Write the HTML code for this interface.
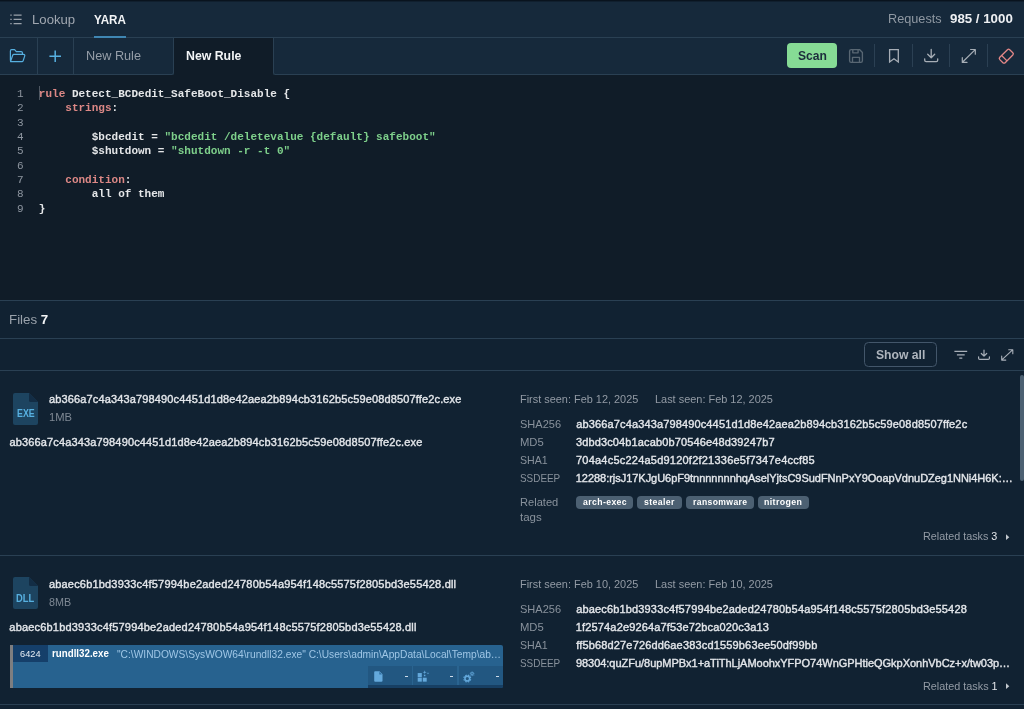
<!DOCTYPE html>
<html>
<head>
<meta charset="utf-8">
<title>YARA</title>
<style>
*{box-sizing:border-box;margin:0;padding:0}
html,body{width:1024px;height:709px;overflow:hidden;background:#112232;font-family:"Liberation Sans",sans-serif;color:#e3e6ea}
.abs{position:absolute}
#root{position:relative;width:1024px;height:709px;overflow:hidden;will-change:transform;-webkit-font-smoothing:antialiased}
/* header */
#hdr{left:0;top:0;width:1024px;height:37px;background:#16293b}
#hdr .strip{left:0;top:0;width:1024px;height:2px;background:linear-gradient(#09131e 0%,#09131e 45%,#16293b 100%)}
.hline{left:0;width:1024px;height:1px;background:#2a4053}
.t13{font-size:13px;line-height:16px;white-space:nowrap}
/* tab bar */
#tabs{left:0;top:38px;width:1024px;height:37px}
.vsep{width:1px;background:#2a4053}
/* editor */
#ed{left:0;top:75px;width:1024px;height:225px;background:#101c28}
.ln{left:0;width:23.5px;text-align:right;color:#8d959f;font-family:"Liberation Mono",monospace;font-size:11px;line-height:14.325px;white-space:pre}
.code{left:38.8px;font-family:"Liberation Mono",monospace;font-size:11px;line-height:14.325px;white-space:pre;color:#e4e6e8;font-weight:bold;letter-spacing:.013px}
.kw{color:#dd8886}
.st{color:#7ed08b}
/* files */
.lbl{color:#89929c}
.f11{font-size:11px;line-height:14px;white-space:nowrap;margin-top:-1px}
.e2 .f11{margin-top:0}
.val{color:#e3e6ea;font-weight:normal;-webkit-text-stroke:.38px #e3e6ea}
.tagbg{height:13px;margin-top:-.2px;border-radius:4px;background:#4c6072}
.tagtx{color:#fff;font-size:9px;font-weight:bold;line-height:12.6px;letter-spacing:.4px;white-space:nowrap}
</style>
</head>
<body>
<div id="root">

<!-- HEADER -->
<div id="hdr" class="abs">
  <div class="strip abs"></div>
  <svg class="abs" style="left:10px;top:14px" width="12" height="11" viewBox="0 0 12 11" fill="none" stroke="#9aa2ab" stroke-width="1.2">
    <path d="M0.3 1.1h1.4M3.6 1.1h8M0.3 5.4h1.4M3.6 5.4h8M0.3 9.7h1.4M3.6 9.7h8"/>
  </svg>
  <div class="abs t13" id="lookup" style="left:32.09px;top:12px;color:#a0a7b0;transform:scaleX(1.0127);transform-origin:0 0">Lookup</div>
  <div class="abs t13" id="yara" style="left:93.95px;top:12px;color:#f2f4f6;font-weight:bold;transform:scaleX(0.8965);transform-origin:0 0">YARA</div>
  <div class="abs t13" id="req" style="left:887.90px;top:11px;color:#8f98a2;transform:scaleX(0.9766);transform-origin:0 0">Requests</div>
  <div class="abs t13" id="reqn" style="left:949.79px;top:11px;color:#eef0f3;font-weight:bold;transform:scaleX(1.0215);transform-origin:0 0">985 / 1000</div>
</div>
<div class="abs hline" style="top:37px"></div>
<div class="abs" style="left:93.5px;top:36px;width:32px;height:2px;background:#3f86b3"></div>

<!-- TAB BAR -->
<div id="tabs" class="abs" style="background:#101c28">
  <div class="abs" style="left:0;top:0;width:174px;height:37px;background:#16293b;border-right:1px solid #2a4053;border-bottom:1px solid #2a4053;border-bottom-right-radius:2.5px"></div>
  <div class="abs" style="left:273px;top:0;width:751px;height:37px;background:#16293b;border-left:1px solid #2a4053;border-bottom:1px solid #2a4053;border-bottom-left-radius:2.5px"></div>
  <div class="abs vsep" style="left:37px;top:0;height:36px"></div>
  <div class="abs vsep" style="left:73px;top:0;height:36px"></div>
  <div class="abs t13" id="tab1" style="left:85.51px;top:10px;color:#969ea8;transform:scaleX(0.9757);transform-origin:0 0">New Rule</div>
  <div class="abs t13" id="tab2" style="left:185.77px;top:10px;color:#f2f4f6;font-weight:bold;transform:scaleX(0.9469);transform-origin:0 0">New Rule</div>
</div>

<!-- TOOLBAR ICONS -->
<svg class="abs" style="left:9px;top:48px" width="17" height="16" viewBox="0 0 17 16" fill="none" stroke="#57b0e0" stroke-width="1.2" stroke-linejoin="round" stroke-linecap="round">
  <path d="M1.4 12.3V2.9c0-.7.5-1.2 1.2-1.2h3l1.7 1.9h4.9c.7 0 1.2.5 1.2 1.2v1.5"/>
  <path d="M1.5 13.6l2.2-6.4c.2-.5.6-.8 1.100-.8h9.900c.8 0 1.300.7 1.050 1.450l-1.600 4.900c-.2.500-.6.850-1.150.850H1.500z"/>
</svg>
<svg class="abs" style="left:49px;top:50px" width="13" height="13" viewBox="0 0 13 13" fill="none" stroke="#57b0e0" stroke-width="1.5">
  <path d="M6.2 0.600v11.400M0.400 6.300h11.600"/>
</svg>
<div class="abs" id="scan" style="left:787px;top:43px;width:50px;height:25px;border-radius:4px;background:#86db95"></div>
<div class="abs t13" id="scantx" style="left:798.16px;top:48px;color:#1c2c3c;font-weight:bold;transform:scaleX(0.9310);transform-origin:0 0">Scan</div>
<svg class="abs" style="left:848px;top:48px" width="16" height="16" viewBox="0 0 16 16" fill="none" stroke="#596773" stroke-width="1.35" stroke-linejoin="round">
  <path d="M1.600 3.200c0-.9.700-1.600 1.600-1.600h8.300l2.900 2.900v8.300c0 .9-.7 1.600-1.600 1.600H3.200c-.9 0-1.600-.7-1.600-1.600z"/>
  <path d="M4.800 1.800v3h5.300v-3M4.500 14.200V9.300h7v4.900"/>
</svg>
<div class="abs vsep" style="left:874px;top:44px;height:23px;background:#2b4053"></div>
<svg class="abs" style="left:888px;top:48px" width="12" height="16" viewBox="0 0 12 16" fill="none" stroke="#a7aeb6" stroke-width="1.300" stroke-linejoin="miter">
  <path d="M1.600 1.700h8.700v12.300l-4.350-3.200-4.350 3.200z"/>
</svg>
<div class="abs vsep" style="left:912px;top:44px;height:23px;background:#2b4053"></div>
<svg class="abs" style="left:923px;top:48px" width="17" height="16" viewBox="0 0 17 16" fill="none" stroke="#a7aeb6" stroke-width="1.300" stroke-linecap="round" stroke-linejoin="round">
  <path d="M8.200 1.500v8M4.700 6.200l3.500 3.500 3.500-3.500M1.700 10.800v1.400c0 .8.600 1.400 1.400 1.400h10.200c.8 0 1.400-.6 1.400-1.400v-1.400"/>
</svg>
<div class="abs vsep" style="left:949px;top:44px;height:23px;background:#2b4053"></div>
<svg class="abs" style="left:961px;top:48px" width="16" height="16" viewBox="0 0 16 16" fill="none" stroke="#a7aeb6" stroke-width="1.200" stroke-linecap="round" stroke-linejoin="round">
  <path d="M1.400 14.300L14.200 1.600M9.600 1.500h4.700v4.700M1.300 9.700v4.700h4.700"/>
</svg>
<div class="abs vsep" style="left:987px;top:44px;height:23px;background:#2b4053"></div>
<svg class="abs" style="left:997px;top:47px" width="18" height="18" viewBox="0 0 18 18" fill="none" stroke="#e38787" stroke-width="1.300" stroke-linejoin="round">
  <g transform="rotate(-45 9.300 9.200)"><rect x="2.300" y="5.400" width="14" height="7.600" rx="1.600"/><path d="M6.500 5.400v7.600"/></g>
</svg>

<!-- EDITOR -->
<div id="ed" class="abs">
<div class="abs ln" style="top:12px">1
2
3
4
5
6
7
8
9</div>
<div class="abs" style="left:39px;top:11px;width:1px;height:14px;background:#4e5762"></div>
<div class="abs code" style="top:12px"><span class="kw">rule</span> Detect_BCDedit_SafeBoot_Disable {
    <span class="kw">strings</span>:

        $bcdedit = <span class="st">"bcdedit /deletevalue {default} safeboot"</span>
        $shutdown = <span class="st">"shutdown -r -t 0"</span>

    <span class="kw">condition</span>:
        all of them
}</div>
</div>
<div class="abs hline" style="top:300px"></div>

<!-- FILES HEADER -->
<div class="abs t13" id="files" style="left:8.67px;top:311.5px;color:#9aa2ab;transform:scaleX(1.0242);transform-origin:0 0">Files <b style="color:#f2f4f6">7</b></div>
<div class="abs hline" style="top:338px"></div>
<div class="abs hline" style="top:370px"></div>

<!-- SHOW ALL ROW -->
<div class="abs" id="showall" style="left:864px;top:342px;width:73px;height:25px;border:1px solid #43566a;border-radius:4.500px"></div>
<div class="abs t13" id="showtx" style="color:#aeb5bd;left:875.66px;top:347px;font-weight:bold;transform:scaleX(0.9363);transform-origin:0 0">Show all</div>
<svg class="abs" style="left:954px;top:350px" width="14" height="10" viewBox="0 0 14 10" fill="none" stroke="#a9b0b9" stroke-width="1.300">
  <path d="M0.400 1.300h12.800M2.900 4.800h7.800M5.300 8.200h3"/>
</svg>
<svg class="abs" style="left:977px;top:349px" width="14" height="12" viewBox="0 0 14 12" fill="none" stroke="#a9b0b9" stroke-width="1.200" stroke-linecap="round" stroke-linejoin="round">
  <path d="M7 1.200v5.800M4.300 4.500L7 7.200l2.700-2.700M1.600 7.800v1.400c0 .7.500 1.200 1.200 1.200h8.400c.7 0 1.200-.5 1.200-1.200V7.800"/>
</svg>
<svg class="abs" style="left:1000px;top:348px" width="14" height="14" viewBox="0 0 14 14" fill="none" stroke="#a9b0b9" stroke-width="1.100" stroke-linecap="round" stroke-linejoin="round">
  <path d="M1.800 11.900L12.600 1.900M8.700 1.700h4.100v4.100M1.700 8v4.100h4.100"/>
</svg>
<div class="abs" style="left:1020px;top:374.500px;width:4px;height:106px;border-radius:2px;background:#4c6072"></div>
<!-- ENTRY 1 -->
<div class="abs" style="left:0;top:370.5px;width:1024px;height:0">
<svg class="abs" style="left:13.2px;top:22px" width="25" height="32" viewBox="0 0 25 32"><path d="M2 0h14L25 9V30a2 2 0 0 1-2 2H2a2 2 0 0 1-2-2V2a2 2 0 0 1 2-2z" fill="#1d4460"/><path d="M16 0L25 9h-7.500a1.500 1.500 0 0 1-1.500-1.500z" fill="#132d45"/></svg>
<div class="abs" id="ext1" style="left:16.85px;top:37.500px;font-size:10px;line-height:12px;color:#57b0e0;font-weight:bold;white-space:nowrap;transform:scaleX(0.8819);transform-origin:0 0">EXE</div>
<div class="abs f11 val" id="fn1" style="left:49.03px;top:22.300px;letter-spacing:0.141px">ab366a7c4a343a798490c4451d1d8e42aea2b894cb3162b5c59e08d8507ffe2c.exe</div>
<div class="abs f11" id="sz1" style="left:48.77px;top:40px;color:#7f8994;transform:scaleX(1.0188);transform-origin:0 0">1MB</div>
<div class="abs f11 val" id="fn1b" style="left:9.47px;top:65.300px;letter-spacing:0.148px">ab366a7c4a343a798490c4451d1d8e42aea2b894cb3162b5c59e08d8507ffe2c.exe</div>
<div class="abs f11" id="fs1" style="left:520.19px;top:22px;color:#939ba5;transform:scaleX(0.9923);transform-origin:0 0">First seen: Feb 12, 2025</div>
<div class="abs f11" id="ls1" style="left:655.07px;top:22px;color:#939ba5;transform:scaleX(0.9934);transform-origin:0 0">Last seen: Feb 12, 2025</div>
<div class="abs f11 lbl" id="k10" style="left:519.77px;top:47px;transform:scaleX(1.0015);transform-origin:0 0">SHA256</div>
<div class="abs f11 val" id="v10" style="left:576.20px;top:47px;letter-spacing:0.140px">ab366a7c4a343a798490c4451d1d8e42aea2b894cb3162b5c59e08d8507ffe2c</div>
<div class="abs f11 lbl" id="k11" style="left:520.19px;top:65px;transform:scaleX(1.0222);transform-origin:0 0">MD5</div>
<div class="abs f11 val" id="v11" style="left:575.99px;top:65px;letter-spacing:0.133px">3dbd3c04b1acab0b70546e48d39247b7</div>
<div class="abs f11 lbl" id="k12" style="left:519.83px;top:83px;transform:scaleX(0.9644);transform-origin:0 0">SHA1</div>
<div class="abs f11 val" id="v12" style="left:575.98px;top:83px;letter-spacing:0.223px">704a4c5c224a5d9120f2f21336e5f7347e4ccf85</div>
<div class="abs f11 lbl" id="k13" style="left:520.35px;top:101px;transform:scaleX(0.9013);transform-origin:0 0">SSDEEP</div>
<div class="abs f11 val" id="v13" style="left:575.71px;top:101px;letter-spacing:-0.029px">12288:rjsJ17KJgU6pF9tnnnnnnnhqAselYjtsC9SudFNnPxY9OoapVdnuDZeg1NNi4H6K:&hellip;</div>
<div class="abs f11 lbl" id="rt1" style="left:520.18px;top:125.5px;transform:scaleX(1.0077);transform-origin:0 0">Related</div>
<div class="abs f11 lbl" id="rt1b" style="left:520.15px;top:140.5px;transform:scaleX(1.0454);transform-origin:0 0">tags</div>
<div class="abs tagbg" style="left:576.0px;top:125.4px;width:57.3px"></div><div class="abs tagtx" id="tg10" style="left:582.83px;top:125.4px;transform:scaleX(0.9655);transform-origin:0 0">arch-exec</div>
<div class="abs tagbg" style="left:637.3px;top:125.4px;width:44.7px"></div><div class="abs tagtx" id="tg11" style="left:643.99px;top:125.4px;transform:scaleX(0.9704);transform-origin:0 0">stealer</div>
<div class="abs tagbg" style="left:686.0px;top:125.4px;width:68.0px"></div><div class="abs tagtx" id="tg12" style="left:692.58px;top:125.4px;transform:scaleX(0.9544);transform-origin:0 0">ransomware</div>
<div class="abs tagbg" style="left:757.6px;top:125.4px;width:51.0px"></div><div class="abs tagtx" id="tg13" style="left:763.75px;top:125.4px;transform:scaleX(0.9788);transform-origin:0 0">nitrogen</div>
<div class="abs f11" id="rk1" style="left:922.68px;top:159px;color:#939ba5;transform:scaleX(0.9802);transform-origin:0 0">Related tasks <span style="color:#e3e6ea">3</span></div>
<svg class="abs" style="left:1006.2px;top:163.0px" width="4" height="7" viewBox="0 0 4 7"><path d="M0 0.300l3.300 2.900L0 6.100z" fill="#c3c9cf"/></svg>
</div>
<div class="abs hline" style="top:555px"></div>
<!-- ENTRY 2 -->
<div class="abs e2" style="left:0;top:555px;width:1024px;height:0">
<svg class="abs" style="left:13.2px;top:22px" width="25" height="32" viewBox="0 0 25 32"><path d="M2 0h14L25 9V30a2 2 0 0 1-2 2H2a2 2 0 0 1-2-2V2a2 2 0 0 1 2-2z" fill="#1d4460"/><path d="M16 0L25 9h-7.500a1.500 1.500 0 0 1-1.500-1.500z" fill="#132d45"/></svg>
<div class="abs" id="ext2" style="left:16.10px;top:37.500px;font-size:10px;line-height:12px;color:#57b0e0;font-weight:bold;white-space:nowrap;transform:scaleX(0.9373);transform-origin:0 0">DLL</div>
<div class="abs f11 val" id="fn2" style="left:48.93px;top:22.300px;letter-spacing:0.187px">abaec6b1bd3933c4f57994be2aded24780b54a954f148c5575f2805bd3e55428.dll</div>
<div class="abs f11" id="sz2" style="left:49.15px;top:40px;color:#7f8994;transform:scaleX(0.9779);transform-origin:0 0">8MB</div>
<div class="abs f11 val" id="fn2b" style="left:9.37px;top:65.300px;letter-spacing:0.187px">abaec6b1bd3933c4f57994be2aded24780b54a954f148c5575f2805bd3e55428.dll</div>
<div class="abs f11" id="fs2" style="left:520.19px;top:22px;color:#939ba5;transform:scaleX(0.9923);transform-origin:0 0">First seen: Feb 10, 2025</div>
<div class="abs f11" id="ls2" style="left:655.07px;top:22px;color:#939ba5;transform:scaleX(0.9934);transform-origin:0 0">Last seen: Feb 10, 2025</div>
<div class="abs f11 lbl" id="k20" style="left:519.77px;top:47px;transform:scaleX(1.0015);transform-origin:0 0">SHA256</div>
<div class="abs f11 val" id="v20" style="left:576.15px;top:47px;letter-spacing:0.161px">abaec6b1bd3933c4f57994be2aded24780b54a954f148c5575f2805bd3e55428</div>
<div class="abs f11 lbl" id="k21" style="left:520.19px;top:65px;transform:scaleX(1.0222);transform-origin:0 0">MD5</div>
<div class="abs f11 val" id="v21" style="left:575.84px;top:65px;letter-spacing:0.148px">1f2574a2e9264a7f53e72bca020c3a13</div>
<div class="abs f11 lbl" id="k22" style="left:519.83px;top:83px;transform:scaleX(0.9644);transform-origin:0 0">SHA1</div>
<div class="abs f11 val" id="v22" style="left:576.16px;top:83px;letter-spacing:0.164px">ff5b68d27e726dd6ae383cd1559b63ee50df99bb</div>
<div class="abs f11 lbl" id="k23" style="left:520.35px;top:101px;transform:scaleX(0.9013);transform-origin:0 0">SSDEEP</div>
<div class="abs f11 val" id="v23" style="left:575.90px;top:101px;letter-spacing:-0.028px">98304:quZFu/8upMPBx1+aTiThLjAMoohxYFPO74WnGPHtieQGkpXonhVbCz+x/tw03p&hellip;</div>
<div class="abs f11" id="rk2" style="left:922.72px;top:124px;color:#939ba5;transform:scaleX(0.9841);transform-origin:0 0">Related tasks <span style="color:#e3e6ea">1</span></div>
<svg class="abs" style="left:1006.2px;top:128.0px" width="4" height="7" viewBox="0 0 4 7"><path d="M0 0.300l3.300 2.900L0 6.100z" fill="#c3c9cf"/></svg>
</div>
<div class="abs hline" style="top:704px"></div>
<!-- PROCESS BOX -->
<div class="abs" style="left:10px;top:645px;width:493px;height:42.6px;background:#27628f;border-radius:0 2px 2px 0;overflow:hidden">
  <div class="abs" style="left:0;top:0;width:2.5px;height:100%;background:#7e7e80"></div>
  <div class="abs" style="left:2.5px;top:0;width:35px;height:17.3px;background:#153f6a"></div>
  <div class="abs" style="right:0;bottom:0;width:135px;height:21.9px;background:#173f63">
    <div class="abs" style="left:0;top:0;width:135px;height:19.1px;background:#225781"></div>
    <div class="abs" style="left:44px;top:0;width:1.2px;height:19.1px;background:#2a6490"></div>
    <div class="abs" style="left:89.400px;top:0;width:1.2px;height:19.1px;background:#2a6490"></div>
  </div>
</div>
<div class="abs" id="pid" style="left:19.51px;top:647.500px;font-size:9px;line-height:12px;color:#e6edf4;white-space:nowrap;transform:scaleX(1.0253);transform-origin:0 0">6424</div>
<div class="abs f11" id="pname" style="left:52.27px;top:646.500px;color:#fff;font-weight:bold;transform:scaleX(0.8853);transform-origin:0 0">rundll32.exe</div>
<div class="abs f11" id="pcmd" style="left:117.00px;top:647.500px;color:#9fc6e6;transform:scaleX(0.9283);transform-origin:0 0">"C:\WINDOWS\SysWOW64\rundll32.exe" C:\Users\admin\AppData\Local\Temp\ab&hellip;</div>
<svg class="abs" style="left:373.6px;top:671px" width="9" height="11" viewBox="0 0 9 11"><path d="M1.100 0.200h4.300L8.500 3.300v6.500c0 .5-.4.900-.9.900H1.100c-.5 0-.9-.4-.9-.9V1.100c0-.5.400-.9.900-.9z" fill="#64a9dc"/><path d="M5.300 0.800v2.600h2.600z" fill="#2f6e9f"/></svg>
<div class="abs" style="left:404.800px;top:676px;width:2.800px;height:1.200px;background:#cfdcea"></div>
<svg class="abs" style="left:416.500px;top:670px" width="13" height="12" viewBox="0 0 13 12" fill="#64a9dc"><rect x="0.700" y="3.050" width="4.100" height="4.100"/><rect x="0.700" y="7.700" width="4.100" height="3.950"/><rect x="5.800" y="7.700" width="3.900" height="3.950"/><path d="M7.70 0.30L8.15 1.85L9.70 2.30L8.15 2.75L7.70 4.30L7.25 2.75L5.70 2.30L7.25 1.85zM11.00 1.95L11.32 2.93L12.30 3.25L11.32 3.57L11.00 4.55L10.68 3.57L9.70 3.25L10.68 2.93z"/><rect x="6.900" y="4.700" width="1.500" height="1.500"/></svg>
<div class="abs" style="left:450px;top:676px;width:2.800px;height:1.200px;background:#cfdcea"></div>
<svg class="abs" style="left:462.500px;top:670.500px" width="12" height="12" viewBox="0 0 12 12" fill="none" stroke="#64a9dc"><circle cx="4.3" cy="7.6" r="2.35" stroke-width="1.5"/><path d="M6.89 8.67L8.00 9.13M5.37 10.19L5.83 11.30M3.23 10.19L2.77 11.30M1.71 8.67L0.60 9.13M1.71 6.53L0.60 6.07M3.23 5.01L2.77 3.90M5.37 5.01L5.83 3.90M6.89 6.53L8.00 6.07" stroke-width="1.6"/><circle cx="9.1" cy="2.8" r="1.2" stroke-width="0.9"/><path d="M10.60 2.80L11.40 2.80M10.16 3.86L10.73 4.43M9.10 4.30L9.10 5.10M8.04 3.86L7.47 4.43M7.60 2.80L6.80 2.80M8.04 1.74L7.47 1.17M9.10 1.30L9.10 0.50M10.16 1.74L10.73 1.17" stroke-width="0.9"/></svg>
<div class="abs" style="left:495.800px;top:676px;width:2.800px;height:1.200px;background:#cfdcea"></div>

</div>
</body>
</html>
